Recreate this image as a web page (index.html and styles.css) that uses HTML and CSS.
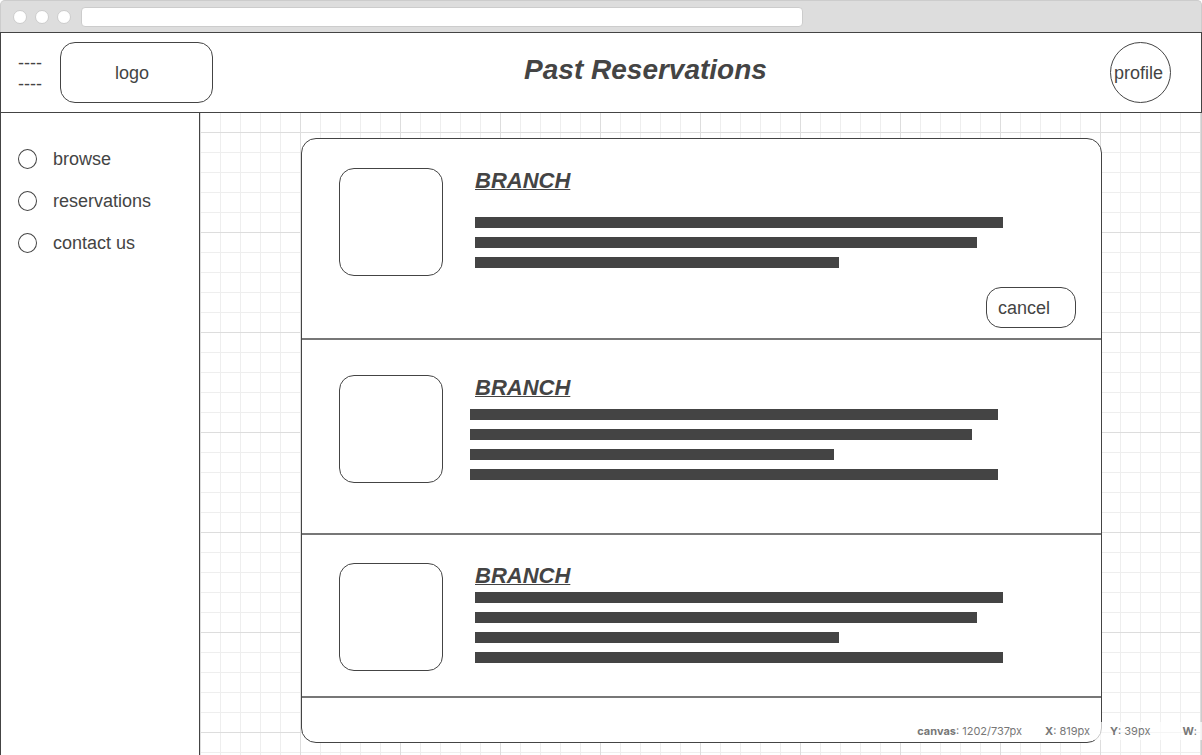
FILE: index.html
```html
<!DOCTYPE html>
<html lang="en">
<head>
<meta charset="utf-8">
<title>Past Reservations</title>
<link rel="stylesheet" href="styles.css">
</head>
<body>
<div class="browser">
  <div class="chrome">
    <span class="dot"></span><span class="dot"></span><span class="dot"></span>
    <input class="address" type="text" aria-label="Address">
  </div>
  <header class="header">
    <button class="menu" type="button" aria-label="Menu"><span>----</span><span>----</span></button>
    <a class="logo" href="#">logo</a>
    <h1 class="title">Past Reservations</h1>
    <a class="profile" href="#">profile</a>
  </header>
  <div class="body">
    <nav class="sidebar">
      <a class="nav-link" href="#"><span class="bullet"></span>browse</a>
      <a class="nav-link" href="#"><span class="bullet"></span>reservations</a>
      <a class="nav-link" href="#"><span class="bullet"></span>contact us</a>
    </nav>
    <main class="main">
      <div class="card">
        <article class="item item-first">
          <div class="row">
            <div class="thumb"></div>
            <div class="details">
              <h2 class="branch">BRANCH</h2>
              <div class="lines">
                <div class="line"></div>
                <div class="line line-medium"></div>
                <div class="line line-short"></div>
              </div>
            </div>
          </div>
          <button class="cancel" type="button">cancel</button>
        </article>
        <article class="item item-second">
          <div class="row">
            <div class="thumb"></div>
            <div class="details">
              <h2 class="branch">BRANCH</h2>
              <div class="lines">
                <div class="line"></div>
                <div class="line line-medium"></div>
                <div class="line line-short"></div>
                <div class="line"></div>
              </div>
            </div>
          </div>
        </article>
        <article class="item item-third">
          <div class="row">
            <div class="thumb"></div>
            <div class="details">
              <h2 class="branch">BRANCH</h2>
              <div class="lines">
                <div class="line"></div>
                <div class="line line-medium"></div>
                <div class="line line-short"></div>
                <div class="line"></div>
              </div>
            </div>
          </div>
        </article>
      </div>
    </main>
  </div>
  <div class="status">
    <span class="status-canvas"><b>canvas</b>: 1202/737px</span>
    <span class="status-x"><b>X</b>: 819px</span>
    <span class="status-y"><b>Y</b>: 39px</span>
    <span><b>W</b>:</span>
  </div>
</div>
</body>
</html>
```
FILE: styles.css
```css
* {
  box-sizing: border-box;
}

body {
  margin: 0;
  background: #fff;
  color: #444;
  font: 18px/20px "Liberation Sans", Arial, sans-serif;
}

a {
  color: inherit;
  text-decoration: none;
}

button {
  margin: 0;
  color: inherit;
  font: inherit;
}

.browser {
  position: relative;
  display: flex;
  flex-direction: column;
  min-height: 100vh;
}

.chrome {
  display: flex;
  align-items: center;
  gap: 8px;
  height: 32px;
  padding: 1px 12px 0;
  border: 1px solid #ccc;
  border-bottom: 0;
  border-radius: 5px 5px 0 0;
  background: #ddd;
}

.dot {
  width: 14px;
  height: 14px;
  border: 1px solid #ccc;
  border-radius: 50%;
  background: #fff;
}

.address {
  width: 64%;
  max-width: 722px;
  height: 20px;
  margin-left: 2px;
  padding: 0 6px;
  border: 1px solid #ccc;
  border-radius: 4px;
  background: #fff;
}

.header {
  display: flex;
  align-items: center;
  height: 81px;
  padding: 0 30px 0 17px;
  border: 1px solid #444;
  background: #fff;
}

.menu {
  display: flex;
  flex-direction: column;
  padding: 2px 0 0;
  border: 0;
  background: none;
  line-height: 21px;
}

.logo {
  display: flex;
  align-items: center;
  justify-content: center;
  width: 153px;
  height: 61px;
  margin-left: 18px;
  padding-right: 9px;
  border: 1px solid #444;
  border-radius: 15px;
}

.title {
  flex: 1;
  margin: 0;
  padding: 0 32px 6px 0;
  font-size: 28px;
  font-style: italic;
  line-height: 32px;
  text-align: center;
}

.profile {
  display: flex;
  align-items: center;
  justify-content: center;
  width: 61px;
  height: 61px;
  padding-right: 4px;
  border: 1px solid #444;
  border-radius: 50%;
}

.body {
  display: flex;
  flex: 1;
}

.sidebar {
  display: flex;
  flex: none;
  flex-direction: column;
  width: 200px;
  padding: 25px 17px;
  border: solid #444;
  border-width: 0 1px;
  background: #fff;
}

.nav-link {
  display: flex;
  align-items: center;
  gap: 16px;
  height: 42px;
}

.bullet {
  width: 19px;
  height: 20px;
  border: 1px solid #444;
  border-radius: 50%;
}

.main {
  flex: 1;
  padding: 25px 99px 12px 101px;
  border-right: 1px solid #ccc;
  background-color: #fff;
  background-image:
    linear-gradient(#ddd 1px, transparent 1px),
    linear-gradient(90deg, #ddd 1px, transparent 1px),
    linear-gradient(#eee 1px, transparent 1px),
    linear-gradient(90deg, #eee 1px, transparent 1px);
  background-position: 0 19px;
  background-size: 100px 100px, 100px 100px, 20px 20px, 20px 20px;
}

.card {
  padding-bottom: 44px;
  border: 1px solid #444;
  border-radius: 15px;
  background: #fff;
}

.item {
  display: flex;
  flex-direction: column;
  border-bottom: 2px solid #777;
}

.item-first {
  padding: 29px 25px 10px 37px;
}

.item-second {
  padding: 35px 25px 50px 37px;
}

.item-third {
  padding: 28px 25px 25px 37px;
}

.row {
  display: flex;
  gap: 27px;
}

.thumb {
  flex: none;
  width: 104px;
  height: 108px;
  border: 1px solid #444;
  border-radius: 15px;
}

.details {
  flex: 1;
}

.branch {
  margin: 0 0 3px 5px;
  font-size: 22px;
  font-style: italic;
  line-height: 26px;
  text-decoration: underline 1px;
  text-underline-offset: 1px;
}

.item-first .branch {
  margin-bottom: 23px;
}

.item-second .branch {
  margin-bottom: 8px;
}

.lines {
  display: flex;
  flex-direction: column;
  gap: 9px;
  max-width: 528px;
  margin-left: 5px;
}

.item-second .lines {
  margin-left: 0;
}

.line {
  height: 11px;
  background: #444;
}

.line-medium {
  width: 95%;
}

.line-short {
  width: 69%;
}

.cancel {
  align-self: flex-end;
  width: 90px;
  height: 41px;
  margin-top: 11px;
  padding: 0 11px;
  border: 1px solid #444;
  border-radius: 15px;
  background: #fff;
  text-align: left;
}

.status {
  position: absolute;
  right: 0;
  bottom: 15px;
  display: flex;
  padding: 0 5px 0 11px;
  background: rgba(255, 255, 255, 0.7);
  color: #777;
  font: 11px/18px Inter, sans-serif;
}

.status-canvas {
  margin-right: 23px;
}

.status-x {
  margin-right: 20px;
}

.status-y {
  margin-right: 32px;
}
```
